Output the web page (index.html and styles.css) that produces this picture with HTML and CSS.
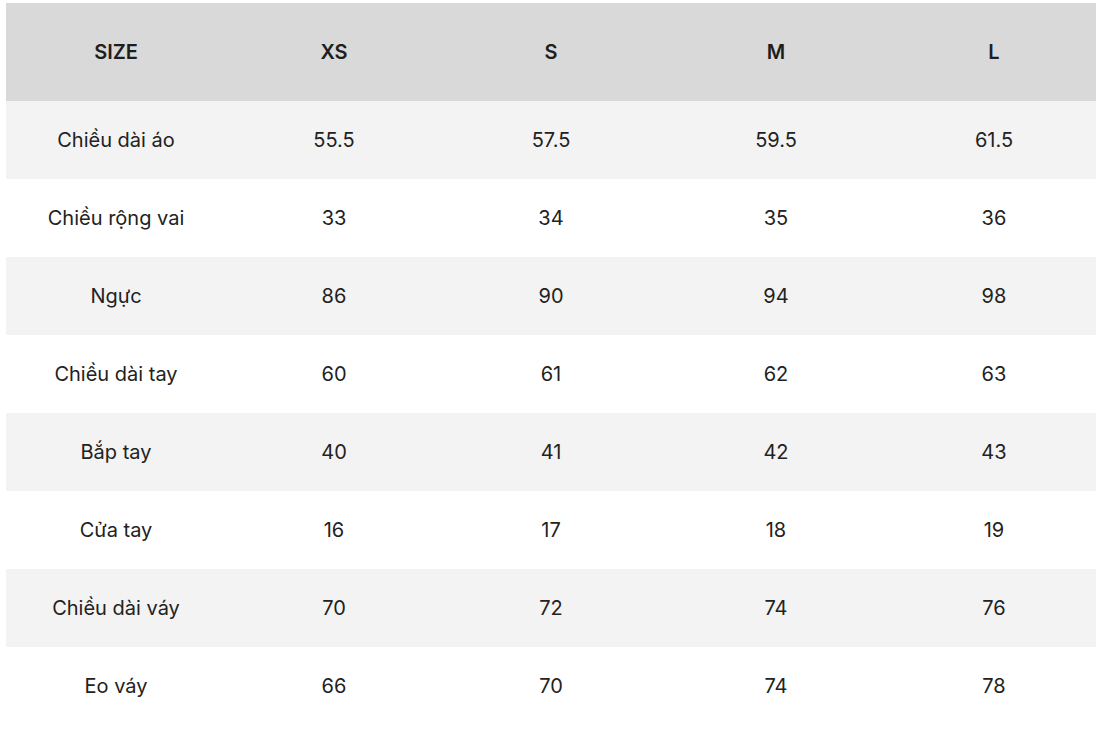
FILE: index.html
```html
<!DOCTYPE html>
<html lang="vi">
<head>
<meta charset="utf-8">
<link rel="stylesheet" href="styles.css">
</head>
<body>
<div class="table">
  <div class="row head"><div>SIZE</div><div>XS</div><div>S</div><div>M</div><div>L</div></div>
  <div class="row alt"><div>Chiều dài áo</div><div>55.5</div><div>57.5</div><div>59.5</div><div>61.5</div></div>
  <div class="row"><div>Chiều rộng vai</div><div>33</div><div>34</div><div>35</div><div>36</div></div>
  <div class="row alt"><div>Ngực</div><div>86</div><div>90</div><div>94</div><div>98</div></div>
  <div class="row"><div>Chiều dài tay</div><div>60</div><div>61</div><div>62</div><div>63</div></div>
  <div class="row alt"><div>Bắp tay</div><div>40</div><div>41</div><div>42</div><div>43</div></div>
  <div class="row"><div>Cửa tay</div><div>16</div><div>17</div><div>18</div><div>19</div></div>
  <div class="row alt"><div>Chiều dài váy</div><div>70</div><div>72</div><div>74</div><div>76</div></div>
  <div class="row"><div>Eo váy</div><div>66</div><div>70</div><div>74</div><div>78</div></div>
</div>
</body>
</html>
```
FILE: styles.css
```css
html, body {
  margin: 0;
  padding: 0;
  background: #ffffff;
}
body {
  padding: 3px 6px 0 6px;
  font-family: Inter, "Noto Sans", "Liberation Sans", sans-serif;
  color: #222222;
}
.table {
  width: 1090px;
}
.row {
  display: grid;
  grid-template-columns: 220px 216px 218px 232px 204px;
  height: 78px;
  align-items: center;
  font-size: 20px;
  background: #ffffff;
}
.row > div {
  text-align: center;
}
.row.alt {
  background: #f3f3f3;
}
.row.head {
  height: 98px;
  background: #d9d9d9;
  font-weight: 600;
  font-size: 20px;
  color: #1e1e1e;
}
```
